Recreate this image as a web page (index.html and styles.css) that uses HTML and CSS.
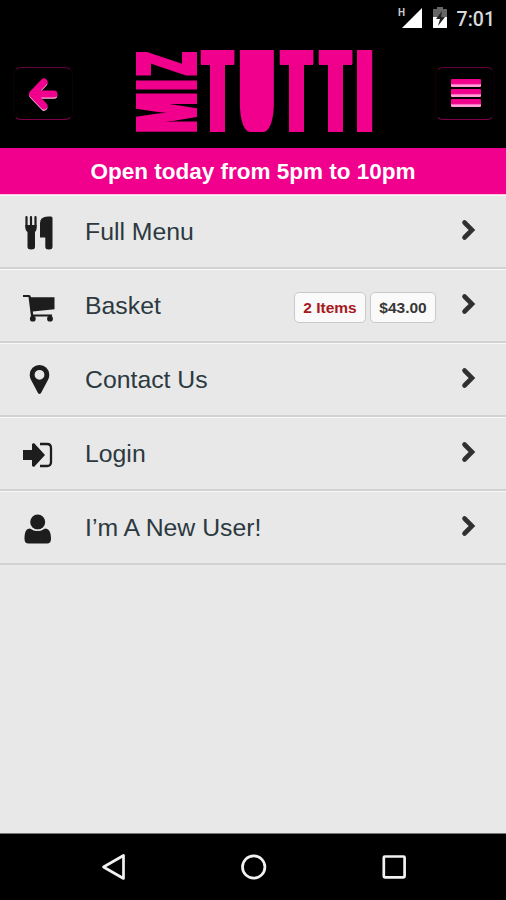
FILE: index.html
```
<!DOCTYPE html>
<html lang="en">
<head>
<meta charset="utf-8">
<title>Miz Tutti</title>
<link rel="stylesheet" href="styles.css">
</head>
<body>
<div class="status">
  <svg class="signal" width="26" height="24" viewBox="0 0 26 24"><path d="M25 3v20H5z" fill="#fff"/><text x="1" y="11" class="net">H</text></svg>
  <svg class="battery" width="14" height="22" viewBox="0 0 14 22"><path d="M4 0h6v2h4v8H0V2h4z" fill="#666"/><path d="M0 10h14v11H0z" fill="#fff"/><path d="M9 4 3 12h4l-2 7 7-9H8z" fill="#222"/></svg>
  <span class="clock">7:01</span>
</div>
<header class="header">
  <button class="btn" aria-label="Back"><svg width="32" height="36" viewBox="0 0 32 36"><g fill="none" stroke-width="6.500" stroke-linejoin="round"><path d="M17 7.500 5.500 19.500 17 31.500M7 19.500h20" stroke="#ffb5df" stroke-linecap="round"/><path d="M17 6 5.500 18 17 30M7 18h20" stroke="#f0008c" stroke-width="7" stroke-linecap="round"/></g></svg></button>
  <svg class="logo" width="240" height="86" viewBox="134 48 240 86" role="img" aria-label="Miz Tutti">
    <defs>
      <filter id="block" filterUnits="userSpaceOnUse" x="130" y="40" width="250" height="100"><feMorphology operator="dilate" radius="7 6"/><feComponentTransfer><feFuncA type="linear" slope="4"/></feComponentTransfer></filter>
      <filter id="bowl" filterUnits="userSpaceOnUse" x="130" y="40" width="250" height="100"><feMorphology operator="dilate" radius="6 1"/></filter>
      <filter id="heavy" filterUnits="userSpaceOnUse" x="130" y="40" width="250" height="100"><feMorphology operator="dilate" radius="1 1"/></filter>
    </defs>
    <g class="heavy" filter="url(#heavy)">
      <text transform="translate(196 112.800) rotate(-90) scale(.42 .815)">M</text>
      <text transform="translate(196 85) rotate(-90) scale(.36 .815)">I</text>
      <text transform="translate(196 63.800) rotate(-90) scale(.36 .815)">Z</text>
    </g>
    <g class="thin" filter="url(#block)">
      <text transform="translate(217.500 126) scale(.39 .963)">T</text>
      <text transform="translate(296.500 126) scale(.39 .963)">T</text>
      <text transform="translate(335.500 126) scale(.39 .963)">T</text>
      <text transform="translate(364.500 126) scale(.39 .963)">I</text>
    </g>
    <g class="heavy" filter="url(#bowl)">
      <text transform="translate(257 129.900) scale(.35 1.080)">U</text>
    </g>
  </svg>
  <button class="btn" aria-label="Menu"><span class="bars"><i></i><i></i><i></i></span></button>
</header>
<div class="hours">Open today from 5pm to 10pm</div>
<main class="list">
  <a class="row">
    <svg class="icon" width="32" height="36" viewBox="0 0 32 36"><path d="M3.500 2v10M8 2v10M12.500 2v10" stroke="#1d1d1d" stroke-width="2.200" stroke-linecap="round"/><path d="M2.400 10h11.200v3c0 2-.7 3-1.600 4v15q0 2.500-3.700 2.500T4.500 32V17C3.400 16 2.400 15 2.400 13zM29.500 3v29q0 2.500-3.600 2.500T22.300 32V22.500H17V8q0-6.500 8-6.500h3q1.500 0 1.500 1.500z" fill="#1d1d1d"/></svg>
    <span class="label">Full Menu</span>
    <svg class="chev" width="14" height="22" viewBox="0 0 14 22"><path d="m2.500 3.500 7.500 7.500-7.500 7.500"/></svg>
  </a>
  <a class="row">
    <svg class="icon" width="32" height="36" viewBox="0 0 32 36"><path d="M0 6h6q1.500 0 2 2.300h23.500v12L9.800 22.500l.4 3H29v2H8L5.500 8H0z" fill="#1d1d1d"/><circle cx="9.800" cy="29.700" r="2.900" fill="#1d1d1d"/><circle cx="27" cy="29.700" r="2.900" fill="#1d1d1d"/></svg>
    <span class="label">Basket</span>
    <span class="tag tag-items">2 Items</span><span class="tag tag-total">$43.00</span>
    <svg class="chev" width="14" height="22" viewBox="0 0 14 22"><path d="m2.500 3.500 7.500 7.500-7.500 7.500"/></svg>
  </a>
  <a class="row">
    <svg class="icon" width="32" height="36" viewBox="0 0 32 36"><path fill-rule="evenodd" d="M16.500 2a9.700 9.700 0 0 1 9.800 9.700c0 3-1.300 5-2.300 7L18 30q-1.500 2-3 0L9 18.700c-1-2-2.300-4-2.300-7A9.700 9.700 0 0 1 16.500 2zm0 4.900a4.900 4.900 0 1 0 0 9.800 4.900 4.900 0 0 0 0-9.800z" fill="#1d1d1d"/></svg>
    <span class="label">Contact Us</span>
    <svg class="chev" width="14" height="22" viewBox="0 0 14 22"><path d="m2.500 3.500 7.500 7.500-7.500 7.500"/></svg>
  </a>
  <a class="row">
    <svg class="icon" width="32" height="36" viewBox="0 0 32 36"><path d="M0 13h9V7l2-1 11 12-11 12-2-1v-6H0z" fill="#1d1d1d"/><path d="M17 7h7q4 0 4 4v14q0 4-4 4h-7" fill="none" stroke="#1d1d1d" stroke-width="2.300"/></svg>
    <span class="label">Login</span>
    <svg class="chev" width="14" height="22" viewBox="0 0 14 22"><path d="m2.500 3.500 7.500 7.500-7.500 7.500"/></svg>
  </a>
  <a class="row">
    <svg class="icon" width="32" height="36" viewBox="0 0 32 36"><circle cx="14.700" cy="11" r="7.500" fill="#1d1d1d"/><path d="M7 17.500q7.500 5 15 0c4 0 6 4 6 10.500 0 3-1.500 4.500-4 4.500H5.500c-2.500 0-4-1.500-4-4.500C1.500 21.500 3 17.500 7 17.500z" fill="#1d1d1d"/><path d="M6.500 16.500q8 5.600 16 0" fill="none" stroke="#e8e8e8"/></svg>
    <span class="label">I’m A New User!</span>
    <svg class="chev" width="14" height="22" viewBox="0 0 14 22"><path d="m2.500 3.500 7.500 7.500-7.500 7.500"/></svg>
  </a>
</main>
<nav class="nav">
  <svg width="28" height="30" viewBox="0 0 28 30"><path d="M23.500 3.500v23L3.500 15z"/></svg>
  <svg width="28" height="30" viewBox="0 0 28 30"><circle cx="13.700" cy="15" r="11.200"/></svg>
  <svg width="28" height="30" viewBox="0 0 28 30"><rect x="3.800" y="4.500" width="20.800" height="20.800" rx="1"/></svg>
</nav>
</body>
</html>
```
FILE: styles.css
```
* { box-sizing: border-box; }
body { margin: 0; width: 506px; height: 900px; overflow: hidden; display: flex; flex-direction: column; background: #e8e8e8; font-family: "Liberation Sans", Arial, sans-serif; }
svg { display: block; flex: none; overflow: visible; }
.status { height: 38px; background: #000; display: flex; justify-content: flex-end; align-items: center; padding: 0 11px 0 0; }
.signal { margin: 0 10px 4px 0; }
.battery { margin: 0 10px 2px 0; }
.net { font: bold 10px Roboto, sans-serif; fill: #ccc; }
.clock { font: 500 19.5px Roboto, sans-serif; color: #d8d8d8; }
.header { height: 110px; background: #000; display: flex; justify-content: space-between; align-items: flex-start; padding: 10px 11px 0 13px; }
.btn { width: 60px; height: 53px; margin-top: 19px; padding: 0; background: #000; border: 1px solid #100008; border-top-color: #60003c; border-bottom-color: #80004c; border-radius: 8px; display: flex; align-items: center; justify-content: center; }
.bars { display: flex; flex-direction: column; gap: 2px; margin: 0 0 1px 1px; }
.bars i { width: 30px; height: 8px; border-radius: 1px; background: linear-gradient(#f0008c 55%, #ff9dd4 75%); }
.logo text { font-family: Inter, sans-serif; font-size: 100px; text-anchor: middle; fill: #f0008c; }
.logo filter { color-interpolation-filters: sRGB; }
.heavy text { font-weight: 900; }
.thin text { font-weight: 100; }
.hours { height: 47px; background: #f0008c; border-bottom: 1px solid #ffc4dc; color: #fff; font-weight: bold; font-size: 22.5px; line-height: 47px; text-align: center; }
.list { flex: 1; }
.row { display: flex; align-items: center; height: 74px; padding: 0 30px 0 23px; border-top: 1px solid #f8f8f8; border-bottom: 2px solid #d2d2d2; }
.icon { margin: 2px 30px 0 0; }
.label { flex: 1; font-size: 24.8px; line-height: 30px; margin-top: 1px; color: #2c3940; }
.tag { height: 31px; line-height: 29px; text-align: center; font-size: 15.5px; font-weight: bold; background: #fafafa; border: 1px solid #c9c9c9; border-radius: 5px; margin-top: 3px; }
.tag-items { width: 72px; color: #a71920; margin-right: 4px; }
.tag-total { width: 66px; color: #383838; margin-right: 26px; }
.chev { margin-bottom: 3px; }
.chev path { fill: none; stroke: #303030; stroke-width: 4.6; stroke-linecap: round; stroke-linejoin: miter; }
.nav { height: 67px; background: #000; border-top: 1px solid #777; display: flex; justify-content: space-between; align-items: center; padding: 0 98px 0 100px; }
.nav path, .nav circle, .nav rect { fill: none; stroke: #f2f2f2; stroke-width: 2.7; stroke-linejoin: round; }
```
